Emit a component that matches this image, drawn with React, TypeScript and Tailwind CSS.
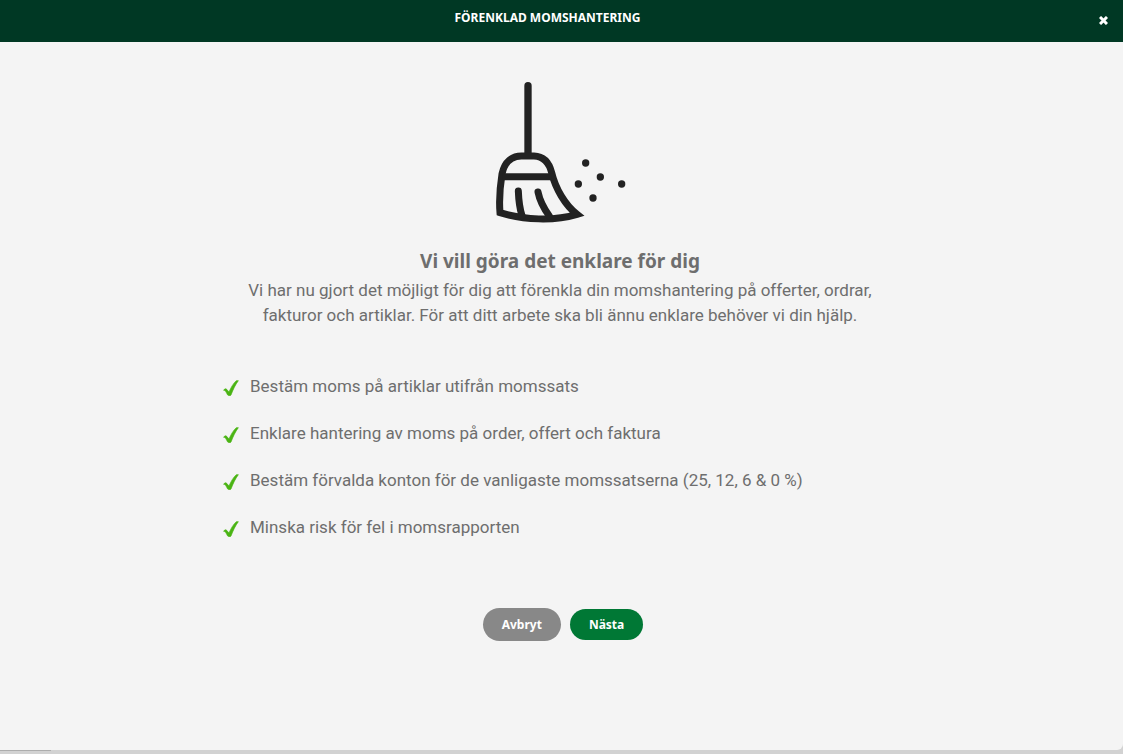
import { useState } from 'react';

const benefits = [
  'Bestäm moms på artiklar utifrån momssats',
  'Enklare hantering av moms på order, offert och faktura',
  'Bestäm förvalda konton för de vanligaste momssatserna (25, 12, 6 & 0 %)',
  'Minska risk för fel i momsrapporten',
];

function BroomIcon() {
  return (
    <svg className="h-[165px] w-40" viewBox="0 0 480 495" fill="none" stroke="#222" strokeWidth="21" aria-hidden="true">
      <path d="M144 47V252" strokeWidth="22" strokeLinecap="round" />
      <path d="M60 428C56 380 60 350 66 312C74 273 98 258 124 258H162C193 259 208 280 215 308C226 355 255 405 291 433C222 454 130 450 60 428Z" />
      <path d="M68 320H222" />
      <path d="M115 363C116 390 118 412 126 437M174 366C180 396 192 416 208 438" strokeLinecap="round" />
      <g fill="#222" stroke="none">
        <circle cx="317" cy="279" r="11" />
        <circle cx="361" cy="321" r="11" />
        <circle cx="295" cy="342" r="11" />
        <circle cx="425" cy="342" r="11" />
        <circle cx="339" cy="384" r="11" />
      </g>
    </svg>
  );
}

function CheckIcon() {
  return (
    <svg className="mt-[3px] h-4 w-4 shrink-0" viewBox="0 0 48 48" aria-hidden="true">
      <path fill="#4ab413" stroke="#4ab413" strokeWidth="2" d="M2 31C4 27 8 25 11 28L18 36C24 22 31 10 40 2H46C37 14 30 29 24 45C23 48 16 48 14 45L8 34C6 32 4 31 2 31Z" />
    </svg>
  );
}

export default function App() {
  const [isOpen, setIsOpen] = useState(true);

  const closeDialog = () => {
    setIsOpen(false);
  };

  if (!isOpen) {
    return null;
  }

  return (
    <div className="flex min-h-screen flex-col bg-[#d2d2d2] font-['Roboto',sans-serif] text-[#6e6e6e]">
      <section role="dialog" aria-labelledby="dialog-title" className="flex grow flex-col rounded-br-md bg-[#f4f4f4]">
        <header className="flex h-[42px] items-start bg-[#003824] text-white">
          <h1 id="dialog-title" className="grow pt-2 text-center font-['Noto_Sans',sans-serif] text-xs leading-5 font-bold uppercase">
            Förenklad momshantering
          </h1>
          <button type="button" aria-label="Stäng" onClick={closeDialog} className="mt-3 mr-3 flex h-4 w-4 items-center justify-center">
            <svg className="h-[9px] w-[9px]" viewBox="0 0 9 9" stroke="currentColor" strokeWidth="3" aria-hidden="true">
              <path d="M1 1L8 8M8 1L1 8" />
            </svg>
          </button>
        </header>

        <div className="pr-[3px]">
          <main className="mx-auto flex w-full max-w-[674px] flex-col pt-7">
            <div className="flex flex-col items-center text-center">
              <BroomIcon />
              <h2 className="mt-3 font-['Noto_Sans',sans-serif] text-[19px] leading-7 font-bold">Vi vill göra det enklare för dig</h2>
              <p className="mt-[3px] max-w-[640px] text-[17px] leading-[25px]">
                Vi har nu gjort det möjligt för dig att förenkla din momshantering på offerter, ordrar, fakturor och artiklar. För att ditt arbete ska bli ännu enklare behöver vi din hjälp.
              </p>
            </div>

            <ul className="mt-[46px] flex flex-col gap-[22px]">
              {benefits.map((item) => (
                <li key={item} className="flex items-center gap-[11px] text-[17px] leading-[25px]">
                  <CheckIcon />
                  {item}
                </li>
              ))}
            </ul>

            <div className="mt-[68px] mb-10 flex items-center justify-center gap-[9px] pl-[6px] font-['Noto_Sans',sans-serif] text-xs font-bold text-white">
              <button type="button" onClick={closeDialog} className="h-[33px] rounded-full bg-[#888] px-[19px]">Avbryt</button>
              <button type="button" className="h-[31px] rounded-full bg-[#007835] px-[19px]">Nästa</button>
            </div>
          </main>
        </div>
      </section>
      {/* page edge below the dialog */}
      <div className="h-1">
        <div className="h-px w-[51px] bg-[#adadad]" />
      </div>
    </div>
  );
}
